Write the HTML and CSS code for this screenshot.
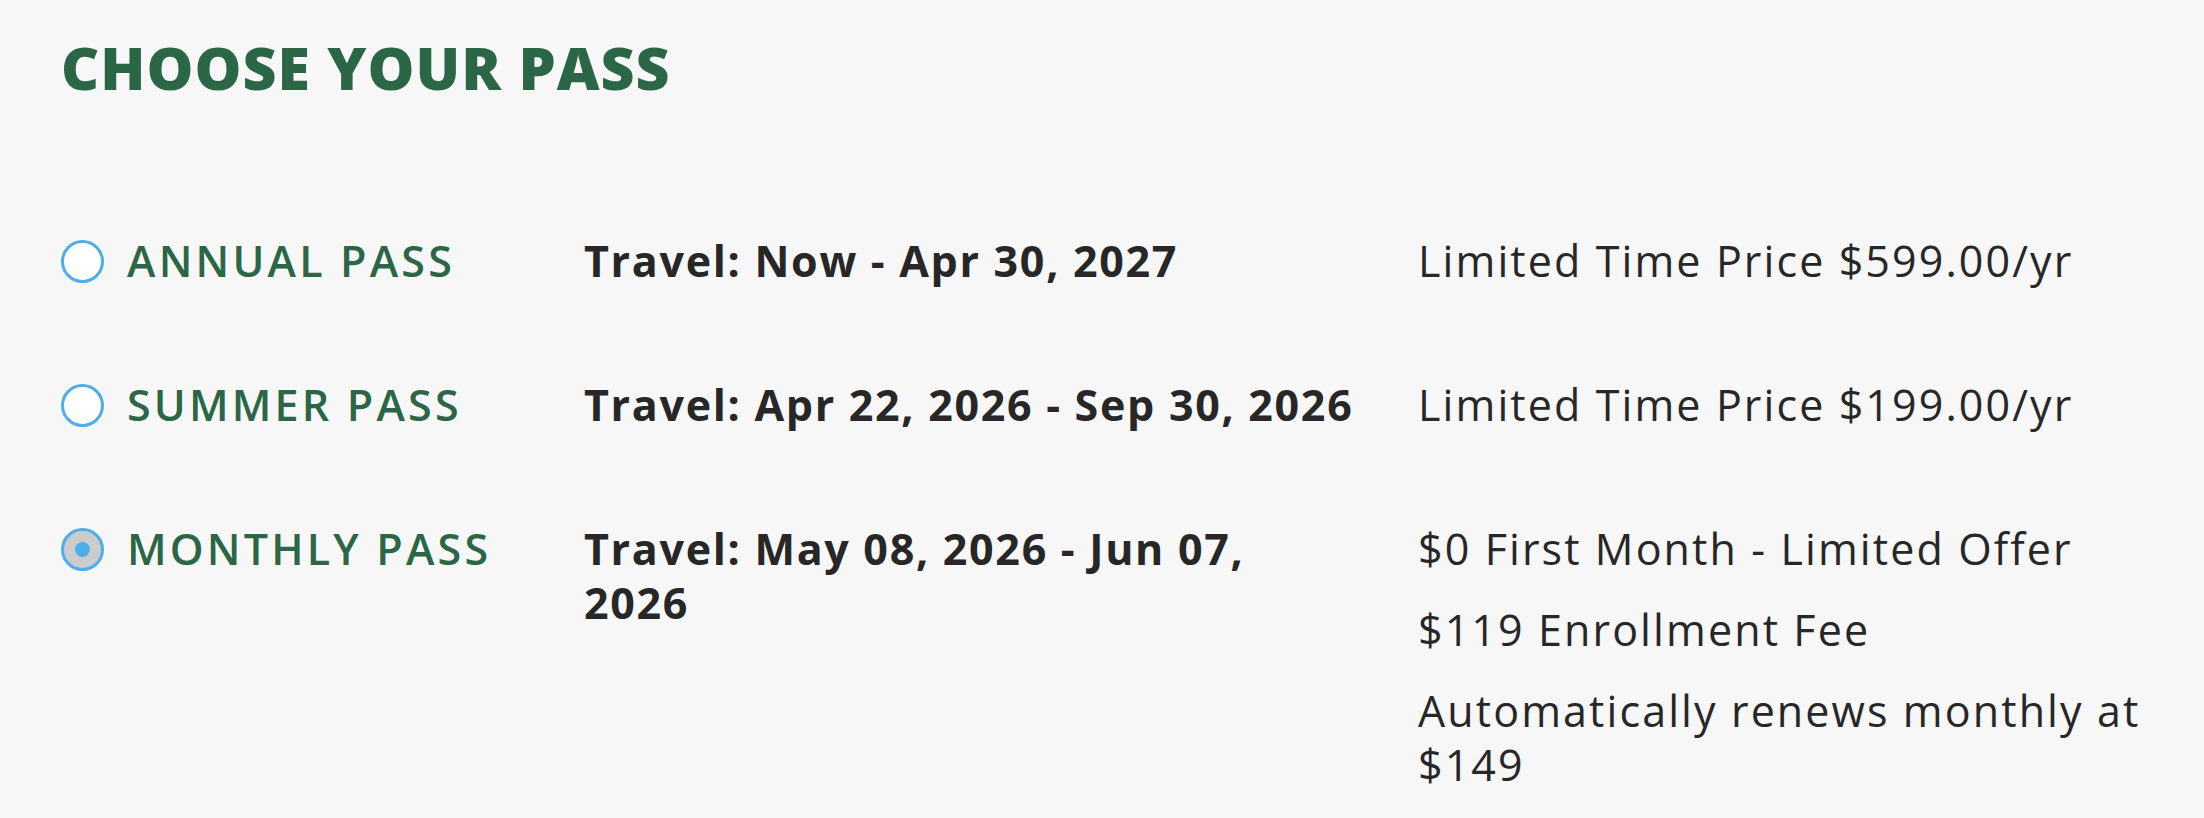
FILE: index.html
```html
<!DOCTYPE html>
<html lang="en">
<head>
<meta charset="utf-8">
<title>Choose Your Pass</title>
<link rel="stylesheet" href="styles.css">
</head>
<body>
<main class="page">
  <h1 class="title">CHOOSE YOUR PASS</h1>
  <div class="passes">
    <div class="name"><span class="radio"></span><span class="label">ANNUAL PASS</span></div>
    <div class="travel">Travel: Now - Apr 30, 2027</div>
    <div class="price"><p>Limited Time Price $599.00/yr</p></div>

    <div class="name"><span class="radio"></span><span class="label">SUMMER PASS</span></div>
    <div class="travel">Travel: Apr 22, 2026 - Sep 30, 2026</div>
    <div class="price"><p>Limited Time Price $199.00/yr</p></div>

    <div class="name"><span class="radio radio-checked"><span class="dot"></span></span><span class="label">MONTHLY PASS</span></div>
    <div class="travel">Travel: May 08, 2026 - Jun 07, 2026</div>
    <div class="price">
      <p>$0 First Month - Limited Offer</p>
      <p>$119 Enrollment Fee</p>
      <p>Automatically renews monthly at $149</p>
    </div>
  </div>
</main>
</body>
</html>
```

FILE: styles.css
```css
html, body {
  margin: 0;
  padding: 0;
  background: #f7f7f7;
}

.page {
  padding: 31px 0 0 61px;
  font-family: "Open Sans", "Noto Sans", sans-serif;
  color: #272727;
}

.title {
  margin: 0;
  font-size: 59px;
  line-height: 72px;
  font-weight: 800;
  letter-spacing: 1px;
  color: #2b6646;
}

.passes {
  margin-top: 131px;
  display: grid;
  grid-template-columns: 523px 834px 760px;
  row-gap: 90px;
  font-size: 43px;
  line-height: 54px;
}

.name {
  display: flex;
  align-items: flex-start;
  gap: 23px;
}

.label {
  color: #2b6646;
  font-weight: 600;
  letter-spacing: 3.2px;
}

.radio {
  flex: none;
  box-sizing: border-box;
  width: 43px;
  height: 43px;
  margin-top: 6px;
  border: 3px solid #4eaee9;
  border-radius: 50%;
  background: #ffffff;
  display: flex;
  align-items: center;
  justify-content: center;
}

.radio-checked {
  background: #cccccc;
}

.dot {
  width: 15px;
  height: 15px;
  border-radius: 50%;
  background: #4eaee9;
}

.travel {
  font-weight: 700;
  letter-spacing: 1.7px;
  padding-right: 58px;
}

.price {
  display: flex;
  flex-direction: column;
  gap: 27px;
  letter-spacing: 2.1px;
}

.price p {
  margin: 0;
}
```
